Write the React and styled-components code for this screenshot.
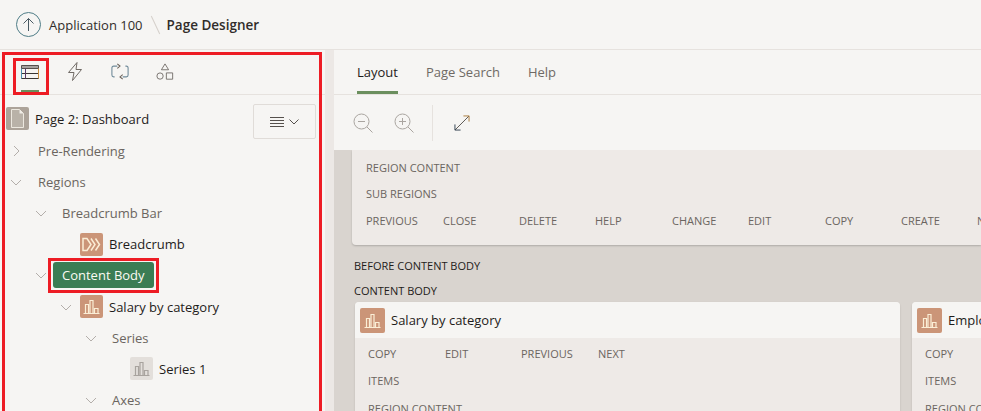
import React from 'react'
import styled, { createGlobalStyle } from 'styled-components'

const Global = createGlobalStyle`
  html, body { margin: 0; padding: 0; }
  body {
    width: 981px;
    height: 411px;
    overflow: hidden;
    font-family: "Open Sans", "Liberation Sans", sans-serif;
    background: #f6f5f3;
  }
`

const Page = styled.div`
  width: 981px;
  height: 411px;
  overflow: hidden;
  display: flex;
  flex-direction: column;
  position: relative;
`

const Header = styled.header`
  height: 49px;
  flex: none;
  display: flex;
  align-items: center;
  padding-left: 16px;
  background: #f6f5f3;
  border-bottom: 1px solid #e6e2de;
  color: #312d2a;
  font-size: 13px;
`

const UpButton = styled.div`
  width: 25px;
  height: 25px;
  box-sizing: border-box;
  border: 1px solid #4f7d87;
  border-radius: 50%;
  display: flex;
  align-items: center;
  justify-content: center;
  margin-right: 8px;
`

const Slash = styled.span`
  width: 1px;
  height: 20px;
  margin: 0 11px 0 12px;
  background: #d5d0cb;
  transform: rotate(-25deg);
`

const PageName = styled.strong`
  font-weight: 600;
  font-size: 13.5px;
  color: #312d2a;
`

const Main = styled.div`
  flex: 1;
  display: flex;
  min-height: 0;
`

const LeftPanel = styled.section`
  width: 325px;
  flex: none;
  background: #f6f5f3;
  position: relative;
`

const Splitter = styled.div`
  width: 9px;
  flex: none;
  background: #ece8e5;
`

const Annotation = styled.div`
  position: absolute;
  box-sizing: border-box;
  border: 3px solid #ed1c24;
  pointer-events: none;
  left: ${p => p.$left}px;
  top: ${p => p.$top}px;
  width: ${p => p.$width}px;
  height: ${p => p.$height}px;
`

const IconTabs = styled.div`
  height: 45px;
  box-sizing: border-box;
  display: flex;
  align-items: stretch;
  padding-left: 21px;
  gap: 27px;
  border-bottom: 1px solid #e6e2de;
`

const IconTab = styled.div`
  width: 18px;
  display: flex;
  align-items: center;
  justify-content: center;
  box-sizing: border-box;
  padding-top: 3px;
  border-bottom: 4px solid ${p => (p.$active ? '#6b8f5e' : 'transparent')};
`

const Tree = styled.div`
  padding-top: 6px;
`

const TreeRow = styled.div`
  height: 31.2px;
  display: flex;
  align-items: center;
  padding-left: ${p => p.$indent}px;
  font-size: 13px;
  color: ${p => (p.$muted ? '#6b6560' : '#1f1c1a')};
  white-space: nowrap;
`

const Twisty = styled.span`
  width: 20px;
  margin-right: ${p => p.$gap ?? 11}px;
  display: flex;
  justify-content: center;
  flex: none;
`

const NodeIcon = styled.span`
  width: 23px;
  height: 23px;
  border-radius: 2px;
  flex: none;
  margin-right: 6px;
  display: flex;
  align-items: center;
  justify-content: center;
  background: ${p => p.$bg};
`

const RootRow = styled(TreeRow)`
  height: 34px;
  padding-left: 6px;
  justify-content: space-between;
  padding-right: 9px;
`

const RootLabel = styled.div`
  display: flex;
  align-items: center;
  margin-top: 1px;
`

const MenuButton = styled.div`
  width: 63px;
  height: 35px;
  margin-top: 7px;
  box-sizing: border-box;
  border: 1px solid #e0dcd8;
  border-radius: 2px;
  display: flex;
  align-items: center;
  justify-content: center;
  gap: 5px;
`

const SelectedNode = styled.span`
  background: #3b7d54;
  color: #fbfaf3;
  height: 26px;
  padding: 0 9px;
  border-radius: 3px;
  display: flex;
  align-items: center;
  margin-left: -9px;
`

const RightPanel = styled.section`
  flex: 1;
  min-width: 0;
  display: flex;
  flex-direction: column;
`

const Tabs = styled.nav`
  height: 44px;
  flex: none;
  display: flex;
  gap: 28px;
  padding-left: 23px;
  border-bottom: 1px solid #e6e2de;
  background: #f6f5f3;
`

const Tab = styled.div`
  box-sizing: border-box;
  height: 44px;
  padding-top: 2px;
  display: flex;
  align-items: center;
  font-size: 13px;
  color: ${p => (p.$active ? '#1f1c1a' : '#6f6a65')};
  border-bottom: 3px solid ${p => (p.$active ? '#6b8f5e' : 'transparent')};
`

const Toolbar = styled.div`
  height: 55px;
  flex: none;
  display: flex;
  align-items: center;
  padding-left: 19px;
  background: #f6f5f3;
`

const ToolIcon = styled.span`
  width: 22px;
  display: flex;
  margin-right: ${p => p.$gap}px;
`

const ToolDivider = styled.span`
  width: 1px;
  height: 36px;
  background: #e6e2de;
  margin-right: 21px;
  margin-left: -3px;
`

const Canvas = styled.div`
  flex: 1;
  min-height: 0;
  overflow: hidden;
  background: #d9d4cf;
  padding-left: 18px;
`

const TopRegion = styled.div`
  background: #eeeae7;
  height: 95px;
  border-radius: 0 0 0 4px;
  box-shadow: 0 1px 2px rgba(0, 0, 0, 0.2);
  box-sizing: border-box;
  padding-top: 9px;
  padding-left: 14px;
`

const Row = styled.div`
  height: ${p => p.$height || 26}px;
  display: flex;
  align-items: center;
`

const Cell = styled.span`
  width: ${p => p.$width}px;
  flex: none;
  font-size: 11px;
  color: #6b6560;
  white-space: nowrap;
`

const PositionLabel = styled.div`
  font-size: 11px;
  color: #1f1c1a;
  height: 25px;
  display: flex;
  align-items: center;
  margin-left: 2px;
`

const BeforeBody = styled(PositionLabel)`
  margin-top: 8px;
`

const Cards = styled.div`
  display: flex;
  gap: 12px;
  margin-left: 3px;
  margin-top: -1px;
`

const Card = styled.div`
  width: ${p => p.$width}px;
  flex: none;
  border-radius: 4px 4px 0 0;
  background: #eeeae7;
  box-shadow: 0 1px 2px rgba(0, 0, 0, 0.15);
  overflow: hidden;
`

const CardHead = styled.div`
  height: 36px;
  background: #f6f5f3;
  display: flex;
  align-items: center;
  padding-left: 5px;
  font-size: 13px;
  color: #1f1c1a;
  white-space: nowrap;
`

const CardIcon = styled(NodeIcon)`
  width: 25px;
  height: 25px;
  margin-right: 6px;
`

const CardBody = styled.div`
  padding: 2px 0 0 13px;
`

const Chevron = ({ dir = 'down' }) => (
  <svg width="12" height="12" viewBox="0 0 12 12" fill="none" stroke="#b3aeaa" strokeWidth="1">
    <path d={dir === 'down' ? 'M1 4l5 5 5-5' : 'M4 1l5 5-5 5'} />
  </svg>
)

const BarChart = ({ color = '#fbeed6', size = 17 }) => (
  <svg width={size} height={size} viewBox="0 0 17 17" fill="none" stroke={color} strokeWidth="1.200">
    <path d="M.5 15.500h16M2.500 15.500V6.500h3v9M7 15.500V2.500h3v13M11.500 15.500v-5h3.500v5" />
  </svg>
)

const ChartNode = () => (
  <NodeIcon $bg="#cb9578">
    <BarChart />
  </NodeIcon>
)

export default function App() {
  return (
    <Page>
      <Global />
      <Header>
        <UpButton>
          <svg width="13" height="15" viewBox="0 0 13 15" fill="none" stroke="#4a5a63" strokeWidth="1">
            <path d="M6.500 14V1.500M1.500 6.500l5-5 5 5" />
          </svg>
        </UpButton>
        Application 100
        <Slash />
        <PageName>Page Designer</PageName>
      </Header>
      <Main>
        <LeftPanel>
          <IconTabs>
            <IconTab $active>
              <svg width="18" height="14" viewBox="0 0 18 14" fill="none" strokeWidth="1">
                <path d="M.5.500h17v3H.500z" fill="#a5a19d" stroke="#55504c" />
                <path d="M.5 3.500v10h17v-10M.5 8.500h17" stroke="#3a3633" />
                <path d="M4.500 3.500v10" stroke="#5a3a6a" />
                <path d="M.5 3.500v10" stroke="#4d8fb0" />
                <path d="M17.500 3.500v10" stroke="#c98d3c" />
              </svg>
            </IconTab>
            <IconTab>
              <svg width="16" height="19" viewBox="0 0 16 19" fill="none" stroke="#716b66" strokeWidth="1">
                <path d="M10 .5L1.500 10.500h5.500L5.500 18.500l9-11H9z" />
              </svg>
            </IconTab>
            <IconTab>
              <svg width="20" height="19" viewBox="0 0 20 19" fill="none" strokeWidth="1.200">
                <path d="M7 3.500H3q-2 0-2 2v8q0 2 2 2h1" stroke="#6f8a99" />
                <path d="M13 15.500h4q2 0 2-2v-8q0-2-2-2h-1" stroke="#6f8a99" />
                <path d="M7 1l3 2.500-3 2.500" stroke="#6b625a" />
                <path d="M13 13l-3 2.500 3 2.500" stroke="#6b625a" />
              </svg>
            </IconTab>
            <IconTab>
              <svg width="20" height="20" viewBox="0 0 20 20" fill="none" stroke="#716b66" strokeWidth="1">
                <path d="M10 1l4 6.500H6z" />
                <circle cx="4.500" cy="14.500" r="3.500" />
                <path d="M11.500 11h7v7h-7z" />
              </svg>
            </IconTab>
          </IconTabs>
          <Tree>
            <RootRow>
              <RootLabel>
                <NodeIcon $bg="#aca399">
                  <svg width="15" height="19" viewBox="0 0 15 19">
                    <path d="M1.500.5h8l4 4v14h-12z" fill="#b9b2a8" stroke="#ece8df" />
                    <path d="M9.500.5l4 4h-4z" fill="#f0ece6" />
                  </svg>
                </NodeIcon>
                Page 2: Dashboard
              </RootLabel>
              <MenuButton>
                <svg width="14" height="12" viewBox="0 0 14 12" fill="none" stroke="#55504c" strokeWidth="1">
                  <path d="M0 1.500h14M0 4.500h14M0 7.500h14M0 10.500h14" />
                </svg>
                <svg width="10" height="6" viewBox="0 0 10 6" fill="none" stroke="#55504c" strokeWidth="1">
                  <path d="M.5.500L5 5 9.500.500" />
                </svg>
              </MenuButton>
            </RootRow>
            <TreeRow $indent={6} $muted>
              <Twisty $gap={12}><Chevron dir="right" /></Twisty>
              Pre-Rendering
            </TreeRow>
            <TreeRow $indent={6} $muted>
              <Twisty $gap={12}><Chevron /></Twisty>
              Regions
            </TreeRow>
            <TreeRow $indent={31} $muted>
              <Twisty><Chevron /></Twisty>
              Breadcrumb Bar
            </TreeRow>
            <TreeRow $indent={80}>
              <NodeIcon $bg="#cb9578">
                <svg width="19" height="15" viewBox="0 0 19 15" fill="none" stroke="#fbeed6" strokeWidth="1.500">
                  <path d="M1 1.500h4l4 6-4 6H1zM9 1.500l4 6-4 6M13.500 1.500l4 6-4 6" />
                </svg>
              </NodeIcon>
              Breadcrumb
            </TreeRow>
            <TreeRow $indent={31}>
              <Twisty><Chevron /></Twisty>
              <SelectedNode>Content Body</SelectedNode>
            </TreeRow>
            <TreeRow $indent={56}>
              <Twisty $gap={4}><Chevron /></Twisty>
              <ChartNode />
              Salary by category
            </TreeRow>
            <TreeRow $indent={81} $muted>
              <Twisty><Chevron /></Twisty>
              Series
            </TreeRow>
            <TreeRow $indent={130}>
              <NodeIcon $bg="#e3dfdb">
                <BarChart color="#a8a39e" />
              </NodeIcon>
              Series 1
            </TreeRow>
            <TreeRow $indent={81} $muted>
              <Twisty><Chevron /></Twisty>
              Axes
            </TreeRow>
          </Tree>
          <Annotation $left={2} $top={2} $width={320} $height={380} />
          <Annotation $left={13} $top={8} $width={36} $height={37} />
          <Annotation $left={48} $top={208} $width={111} $height={35} />
        </LeftPanel>
        <Splitter />
        <RightPanel>
          <Tabs>
            <Tab $active>Layout</Tab>
            <Tab>Page Search</Tab>
            <Tab>Help</Tab>
          </Tabs>
          <Toolbar>
            <ToolIcon $gap={19}>
              <svg width="20" height="20" viewBox="0 0 20 20" fill="none" stroke="#aaa5a0" strokeWidth="1">
                <circle cx="8.500" cy="8.500" r="7.500" />
                <path d="M14 14l5.500 5.500M5 8.500h7" />
              </svg>
            </ToolIcon>
            <ToolIcon $gap={19}>
              <svg width="20" height="20" viewBox="0 0 20 20" fill="none" stroke="#aaa5a0" strokeWidth="1">
                <circle cx="8.500" cy="8.500" r="7.500" />
                <path d="M14 14l5.500 5.500M5 8.500h7M8.500 5v7" />
              </svg>
            </ToolIcon>
            <ToolDivider />
            <ToolIcon $gap={0}>
              <svg width="16" height="16" viewBox="0 0 17 17" fill="none" strokeWidth="1">
                <path d="M1 16L16 1" stroke="#55504c" />
                <path d="M10 1h6v6" stroke="#a87a3a" />
                <path d="M1 10v6h6" stroke="#2f3f4f" />
              </svg>
            </ToolIcon>
          </Toolbar>
          <Canvas>
            <TopRegion>
              <Row $height={17}><Cell $width={100}>REGION CONTENT</Cell></Row>
              <Row $height={35}><Cell $width={100}>SUB REGIONS</Cell></Row>
              <Row $height={19}>
                <Cell $width={77}>PREVIOUS</Cell>
                <Cell $width={76}>CLOSE</Cell>
                <Cell $width={76}>DELETE</Cell>
                <Cell $width={77}>HELP</Cell>
                <Cell $width={76}>CHANGE</Cell>
                <Cell $width={77}>EDIT</Cell>
                <Cell $width={76}>COPY</Cell>
                <Cell $width={76}>CREATE</Cell>
                <Cell $width={40}>NEXT</Cell>
              </Row>
            </TopRegion>
            <BeforeBody>BEFORE CONTENT BODY</BeforeBody>
            <PositionLabel>CONTENT BODY</PositionLabel>
            <Cards>
              <Card $width={545}>
                <CardHead>
                  <CardIcon $bg="#cb9578"><BarChart /></CardIcon>
                  Salary by category
                </CardHead>
                <CardBody>
                  <Row $height={27}>
                    <Cell $width={77}>COPY</Cell>
                    <Cell $width={76}>EDIT</Cell>
                    <Cell $width={77}>PREVIOUS</Cell>
                    <Cell $width={50}>NEXT</Cell>
                  </Row>
                  <Row $height={27}><Cell $width={100}>ITEMS</Cell></Row>
                  <Row $height={29}><Cell $width={100}>REGION CONTENT</Cell></Row>
                </CardBody>
              </Card>
              <Card $width={200}>
                <CardHead>
                  <CardIcon $bg="#cb9578"><BarChart /></CardIcon>
                  Employees
                </CardHead>
                <CardBody>
                  <Row $height={27}><Cell $width={77}>COPY</Cell></Row>
                  <Row $height={27}><Cell $width={100}>ITEMS</Cell></Row>
                  <Row $height={29}><Cell $width={100}>REGION CONTENT</Cell></Row>
                </CardBody>
              </Card>
            </Cards>
          </Canvas>
        </RightPanel>
      </Main>
    </Page>
  )
}
